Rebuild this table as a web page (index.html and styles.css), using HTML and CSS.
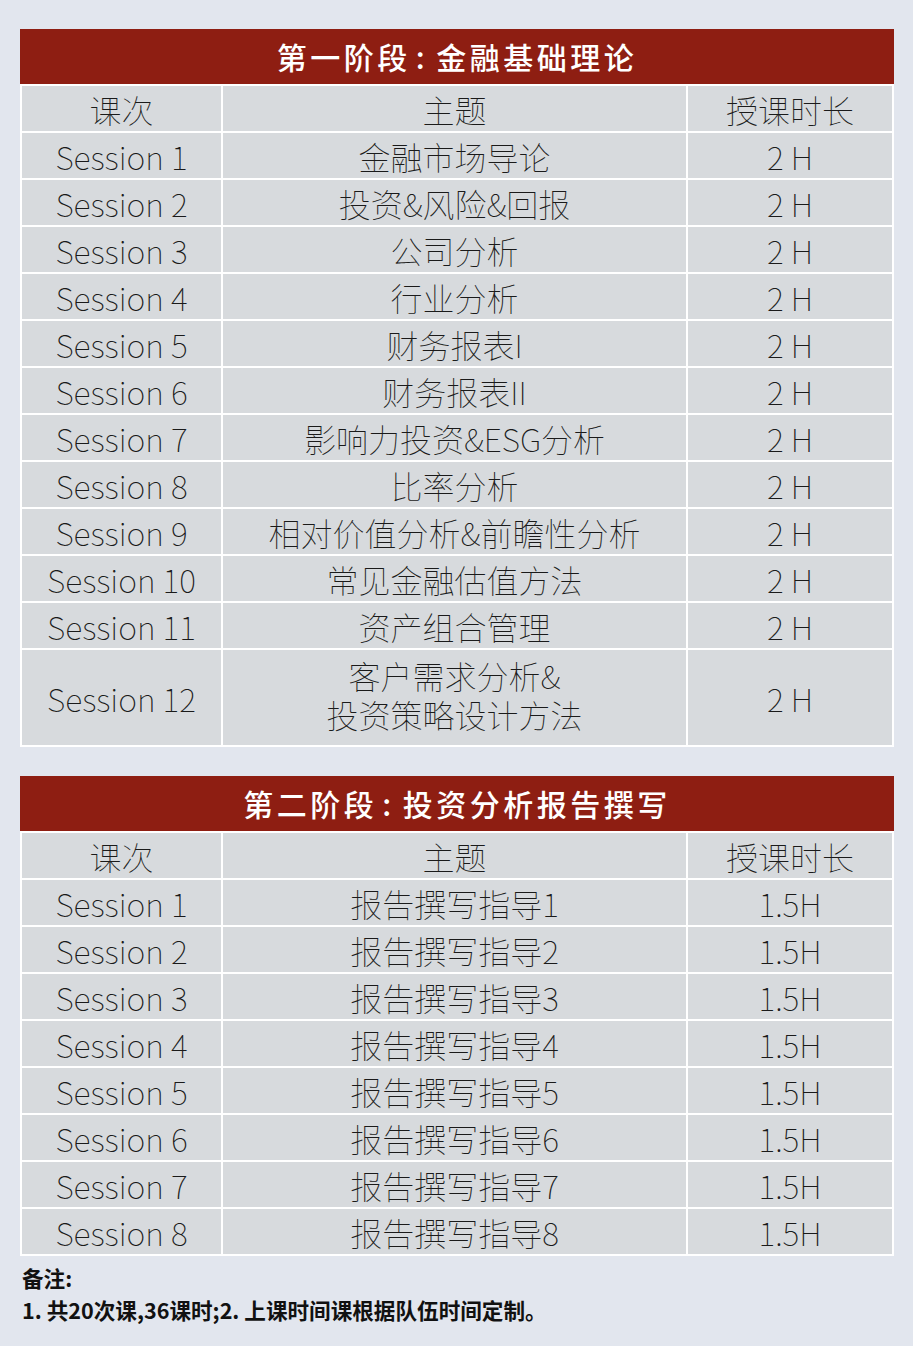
FILE: index.html
```html
<!DOCTYPE html>
<html lang="zh-CN">
<head>
<meta charset="utf-8">
<link rel="stylesheet" href="styles.css">
</head>
<body>
<div class="page">
  <section class="sheet">
    <div class="title">第一阶段<span class="colon">:</span>金融基础理论</div>
    <div class="grid">
      <div class="cell">课次</div><div class="cell">主题</div><div class="cell">授课时长</div>
      <div class="cell">Session 1</div><div class="cell">金融市场导论</div><div class="cell">2 H</div>
      <div class="cell">Session 2</div><div class="cell">投资&amp;风险&amp;回报</div><div class="cell">2 H</div>
      <div class="cell">Session 3</div><div class="cell">公司分析</div><div class="cell">2 H</div>
      <div class="cell">Session 4</div><div class="cell">行业分析</div><div class="cell">2 H</div>
      <div class="cell">Session 5</div><div class="cell">财务报表I</div><div class="cell">2 H</div>
      <div class="cell">Session 6</div><div class="cell">财务报表II</div><div class="cell">2 H</div>
      <div class="cell">Session 7</div><div class="cell">影响力投资&amp;ESG分析</div><div class="cell">2 H</div>
      <div class="cell">Session 8</div><div class="cell">比率分析</div><div class="cell">2 H</div>
      <div class="cell">Session 9</div><div class="cell">相对价值分析&amp;前瞻性分析</div><div class="cell">2 H</div>
      <div class="cell">Session 10</div><div class="cell">常见金融估值方法</div><div class="cell">2 H</div>
      <div class="cell">Session 11</div><div class="cell">资产组合管理</div><div class="cell">2 H</div>
      <div class="cell tall">Session 12</div><div class="cell tall two">客户需求分析&amp;<br>投资策略设计方法</div><div class="cell tall">2 H</div>
    </div>
  </section>

  <section class="sheet second">
    <div class="title">第二阶段<span class="colon">:</span>投资分析报告撰写</div>
    <div class="grid">
      <div class="cell">课次</div><div class="cell">主题</div><div class="cell">授课时长</div>
      <div class="cell">Session 1</div><div class="cell">报告撰写指导1</div><div class="cell">1.5H</div>
      <div class="cell">Session 2</div><div class="cell">报告撰写指导2</div><div class="cell">1.5H</div>
      <div class="cell">Session 3</div><div class="cell">报告撰写指导3</div><div class="cell">1.5H</div>
      <div class="cell">Session 4</div><div class="cell">报告撰写指导4</div><div class="cell">1.5H</div>
      <div class="cell">Session 5</div><div class="cell">报告撰写指导5</div><div class="cell">1.5H</div>
      <div class="cell">Session 6</div><div class="cell">报告撰写指导6</div><div class="cell">1.5H</div>
      <div class="cell">Session 7</div><div class="cell">报告撰写指导7</div><div class="cell">1.5H</div>
      <div class="cell">Session 8</div><div class="cell">报告撰写指导8</div><div class="cell">1.5H</div>
    </div>
  </section>

  <div class="notes">
    <p>备注:</p>
    <p>1. 共20次课,36课时;2. 上课时间课根据队伍时间定制。</p>
  </div>
</div>
</body>
</html>
```

FILE: styles.css
```css
* { box-sizing: border-box; }
html, body {
  margin: 0;
  padding: 0;
  background: #e2e6ee;
}
body {
  font-family: "Noto Sans CJK SC", "Noto Sans", sans-serif;
  color: #1a1a1a;
}
.page {
  width: 913px;
  padding: 29px 19px 0 20px;
}
.sheet {
  width: 874px;
}
.second {
  margin-top: 29px;
}
.title {
  height: 55px;
  background: #8e1e12;
  color: #fff;
  font-size: 30px;
  font-weight: 500;
  letter-spacing: 3.5px;
  text-align: center;
  line-height: 55px;
}
.colon {
  margin: 0 8px 0 5px;
}
.grid {
  display: grid;
  grid-template-columns: 199px 463px 204px;
  gap: 2px;
  padding: 2px;
  background: #ffffff;
}
.cell {
  background: #d7dadd;
  display: flex;
  align-items: center;
  justify-content: center;
  text-align: center;
  height: 45px;
  font-size: 32px;
  font-weight: 100;
  line-height: 38px;
}
.tall {
  height: 95px;
}
.two {
  line-height: 39px;
  padding-bottom: 6px;
}
.notes {
  padding: 6px 0 0 2px;
}
.notes p {
  margin: 0;
  font-size: 21.6px;
  font-weight: 700;
  line-height: 32px;
  color: #111;
}
```
